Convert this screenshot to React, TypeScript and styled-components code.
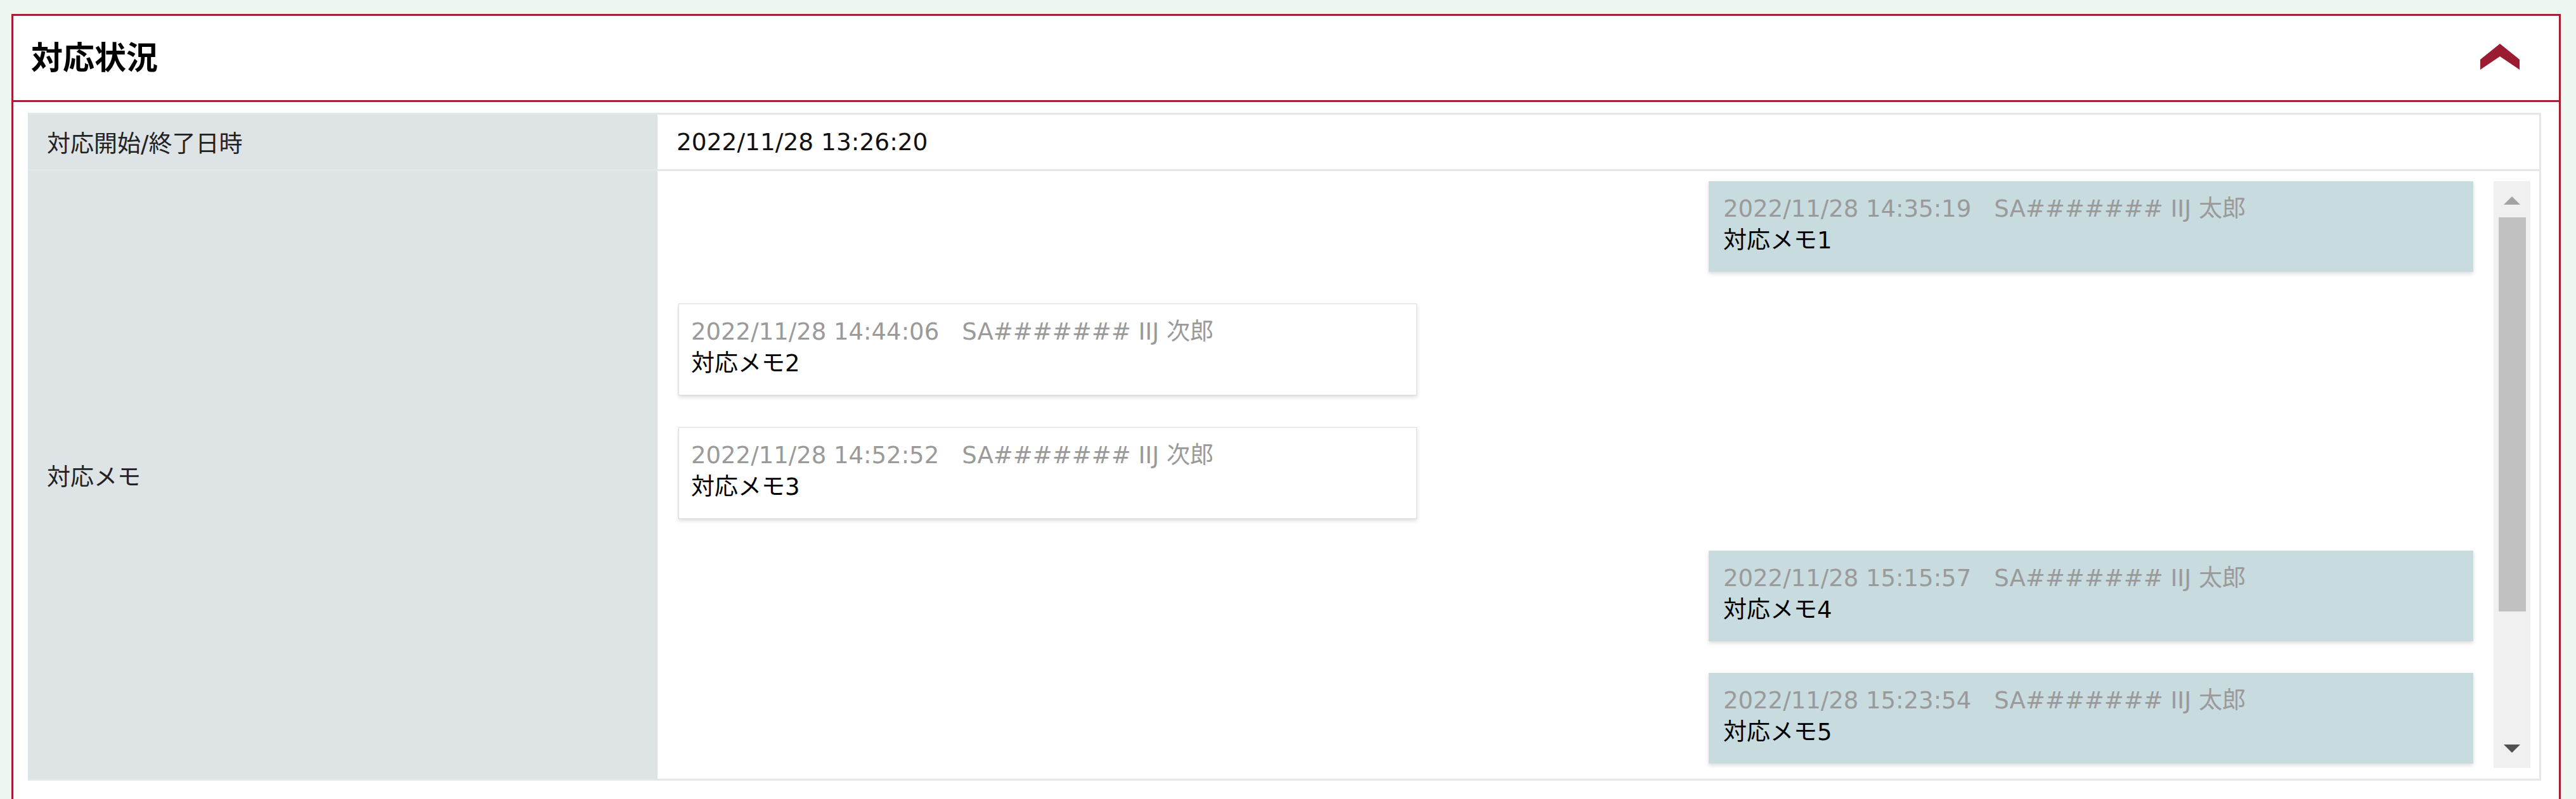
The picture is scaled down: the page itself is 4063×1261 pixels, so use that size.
import React from 'react';
import styled, { createGlobalStyle } from 'styled-components';

interface Memo {
  at: string;
  author: string;
  body: string;
  mine: boolean;
}

const memos: Memo[] = [
  { at: '2022/11/28 14:35:19', author: 'SA####### IIJ 太郎', body: '対応メモ1', mine: true },
  { at: '2022/11/28 14:44:06', author: 'SA####### IIJ 次郎', body: '対応メモ2', mine: false },
  { at: '2022/11/28 14:52:52', author: 'SA####### IIJ 次郎', body: '対応メモ3', mine: false },
  { at: '2022/11/28 15:15:57', author: 'SA####### IIJ 太郎', body: '対応メモ4', mine: true },
  { at: '2022/11/28 15:23:54', author: 'SA####### IIJ 太郎', body: '対応メモ5', mine: true },
];

const App: React.FC = () => {
  return (
    <>
      <GlobalStyle />
      <Page>
        <Panel>
          <PanelHeader>
            <Title>対応状況</Title>
            <Chevron width="62" height="42" viewBox="0 0 62 42">
              <polygon points="0,25 31,0 62,25 62,41 31,20 0,41" fill="#9b1b30" />
            </Chevron>
          </PanelHeader>
          <PanelBody>
            <Table>
              <Row>
                <LabelCell>対応開始/終了日時</LabelCell>
                <ValueCell>2022/11/28 13:26:20</ValueCell>
              </Row>
              <Row $last>
                <LabelCell>対応メモ</LabelCell>
                <MemoCell>
                  <MemoList>
                    {memos.map((m) => (
                      <Bubble key={m.at} $mine={m.mine}>
                        <MemoMeta>
                          <span>{m.at}</span>
                          <Author>{m.author}</Author>
                        </MemoMeta>
                        <MemoBody>{m.body}</MemoBody>
                      </Bubble>
                    ))}
                  </MemoList>
                  <ScrollTrack>
                    <ArrowUp />
                    <Thumb />
                    <ArrowDown />
                  </ScrollTrack>
                </MemoCell>
              </Row>
            </Table>
          </PanelBody>
        </Panel>
      </Page>
    </>
  );
};

export default App;

const GlobalStyle = createGlobalStyle`
  html, body {
    margin: 0;
    padding: 0;
    background: #eef7ef;
  }
  body {
    font-family: "DejaVu Sans", "Noto Sans CJK JP", sans-serif;
    color: #222;
  }
`;

const Page = styled.div`
  padding: 22px 24px 0 18px;
  height: 1261px;
  box-sizing: border-box;
  overflow: hidden;
`;

const Panel = styled.section`
  background: #fff;
  border: 3px solid #a31d33;
  border-bottom: none;
  height: 1239px;
  box-sizing: border-box;
`;

const PanelHeader = styled.header`
  height: 133px;
  display: flex;
  align-items: center;
  justify-content: space-between;
  padding: 0 62px 0 28px;
  border-bottom: 3px solid #a31d33;
`;

const Title = styled.h2`
  margin: 0;
  font-size: 50px;
  font-weight: bold;
  color: #000;
  line-height: 1;
`;

const Chevron = styled.svg`
  display: block;
  margin-top: -4px;
`;

const PanelBody = styled.div`
  padding: 17px 28px 0 23px;
`;

const Table = styled.div`
  border: 3px solid #e2e7ea;
  border-left: none;
`;

const Row = styled.div<{ $last?: boolean }>`
  display: grid;
  grid-template-columns: 993px 1fr;
  border-bottom: ${(p) => (p.$last ? 'none' : '3px solid #e2e7ea')};
`;

const LabelCell = styled.div`
  background: #dee3e6;
  display: flex;
  align-items: center;
  padding: 0 30px;
  font-size: 37px;
  color: #222;
  min-height: 86px;
`;

const ValueCell = styled.div`
  display: flex;
  align-items: center;
  padding: 0 30px;
  font-size: 37.5px;
  color: #111;
`;

const MemoCell = styled.div`
  display: flex;
  padding: 16px 14px 17px 30px;
  height: 926px;
`;

const MemoList = styled.div`
  flex: 1;
  display: flex;
  flex-direction: column;
  gap: 50px;
  overflow: hidden;
  padding: 0 32px 8px 3px;
`;

const Bubble = styled.div<{ $mine: boolean }>`
  flex: none;
  box-sizing: border-box;
  width: ${(p) => (p.$mine ? '1206px' : '1165px')};
  align-self: ${(p) => (p.$mine ? 'flex-end' : 'flex-start')};
  background: ${(p) => (p.$mine ? '#c8dbdf' : '#fff')};
  border: ${(p) => (p.$mine ? 'none' : '1px solid #dcdcdc')};
  box-shadow: 0 3px 6px rgba(0, 0, 0, 0.14);
  padding: ${(p) => (p.$mine ? '19px 23px 24px 23px' : '19px 20px 24px 19px')};
  font-size: 37px;
  line-height: 50px;
`;

const MemoMeta = styled.div`
  color: #9a9a9a;
  white-space: nowrap;
`;

const Author = styled.span`
  margin-left: 36px;
`;

const MemoBody = styled.div`
  color: #000;
`;

const ScrollTrack = styled.div`
  flex: none;
  width: 58px;
  background: #f0f0f0;
  display: flex;
  flex-direction: column;
  align-items: center;
`;

const ArrowUp = styled.div`
  margin-top: 24px;
  width: 0;
  height: 0;
  border-left: 13px solid transparent;
  border-right: 13px solid transparent;
  border-bottom: 13px solid #a3a3a3;
`;

const Thumb = styled.div`
  margin-top: 20px;
  width: 43px;
  height: 622px;
  background: #c1c1c1;
`;

const ArrowDown = styled.div`
  margin-top: auto;
  margin-bottom: 24px;
  width: 0;
  height: 0;
  border-left: 13px solid transparent;
  border-right: 13px solid transparent;
  border-top: 13px solid #505050;
`;
